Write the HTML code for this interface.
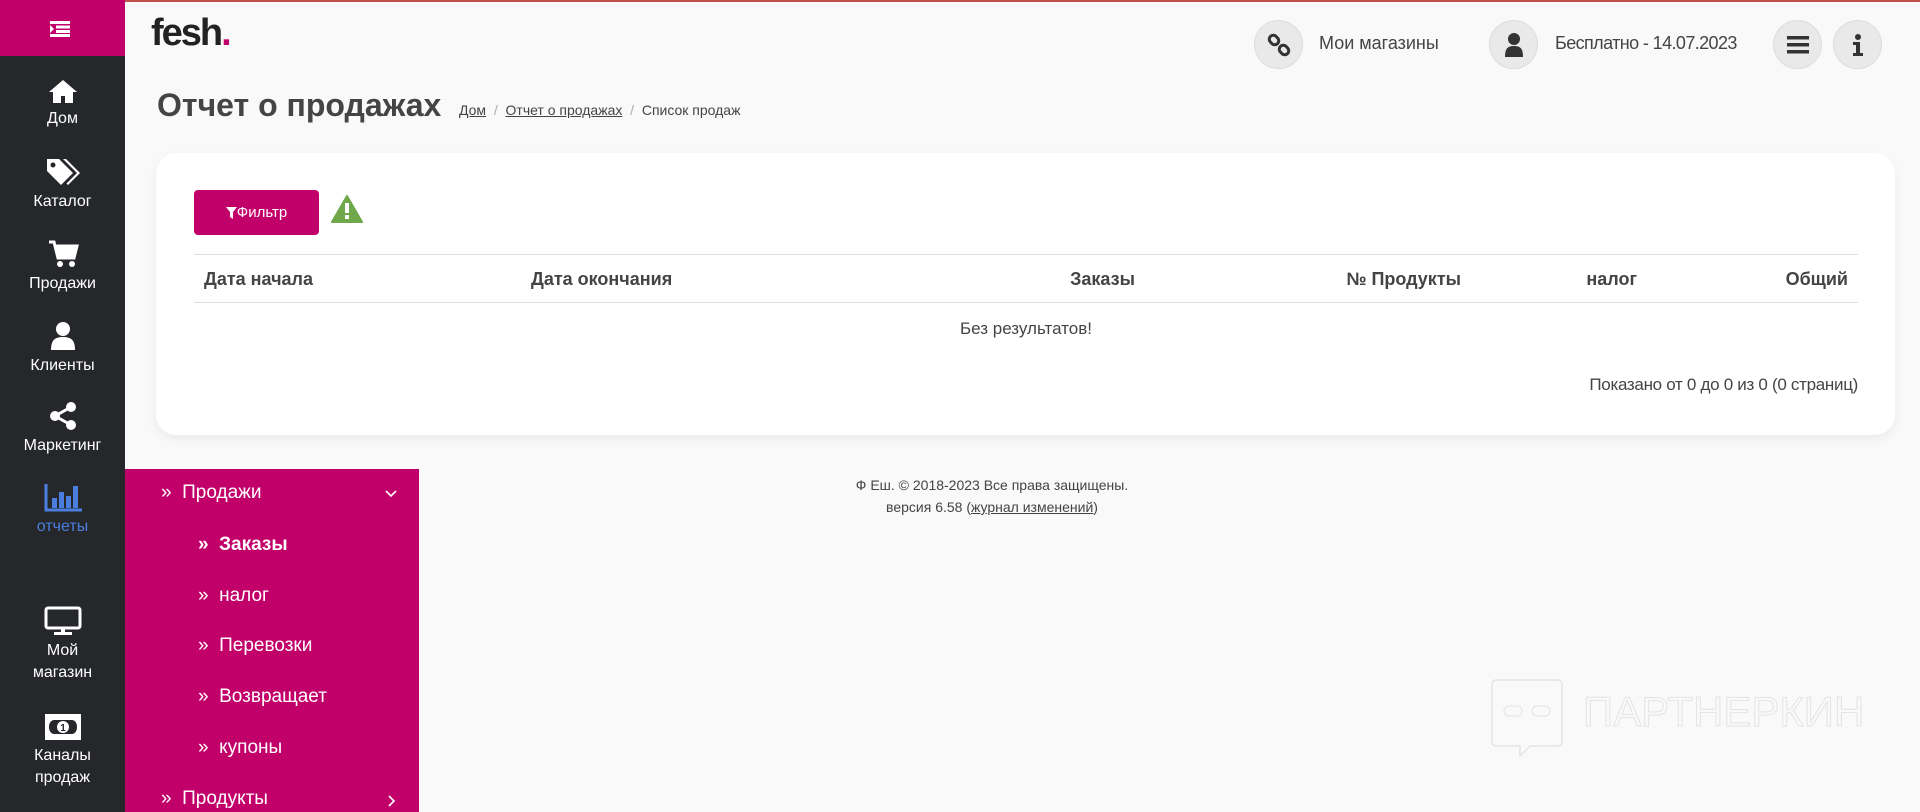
<!DOCTYPE html>
<html><head><meta charset="utf-8"><style>
*{margin:0;padding:0;box-sizing:border-box}
body{width:1920px;height:812px;overflow:hidden;background:#f9f9f9;font-family:"Liberation Sans",sans-serif;color:#333;position:relative}
.abs{position:absolute}
.topline{left:0;top:0;width:1920px;height:2px;background:#c0504d}
.side{left:0;top:0;width:125px;height:812px;background:#25272b}
.sidetop{left:0;top:0;width:125px;height:56px;background:#c2006a}
.si{position:absolute;left:0;width:125px;text-align:center;color:#fff;font-size:16px;line-height:22px}
.si svg{display:block;margin:0 auto 4px}
.sub{left:125px;top:469px;width:294px;height:343px;background:#c2006a;color:#fff}
.sub div{position:absolute;font-size:19px}
.circ{position:absolute;width:49px;height:49px;border-radius:50%;background:#e9e9e9;border:1px solid #ddd;display:flex;align-items:center;justify-content:center}
.card{left:156px;top:153px;width:1739px;height:282px;background:#fff;border-radius:20px;box-shadow:0 4px 10px rgba(0,0,0,.06)}
</style></head><body>
<div class="abs topline"></div>
<div class="abs side"></div>
<div class="abs sidetop"></div>
<svg class="abs" style="left:50px;top:21px" width="20" height="16" viewBox="0 0 20 16"><rect x="0" y="0" width="20" height="3" fill="#fff"/><rect x="6" y="4.5" width="14" height="3" fill="#fff"/><rect x="6" y="9" width="14" height="3" fill="#fff"/><rect x="0" y="13" width="20" height="3" fill="#fff"/><path d="M0 4l4 4-4 4z" fill="#fff"/></svg>

<div class="si" style="top:78px"><svg width="32" height="26" viewBox="0 0 32 26"><path d="M16 2L2 14h4v11h8v-7h4v7h8V14h4z" fill="#fff"/></svg>Дом</div>
<div class="si" style="top:157px"><svg width="36" height="30" viewBox="0 0 36 30"><path d="M2 2h12l14 14-12 12L2 14z" fill="#fff"/><circle cx="8" cy="8" r="2.5" fill="#25272b"/><path d="M18 2h3l14 14-12 12-1.5-1.5L32 16z" fill="#fff"/></svg>Каталог</div>
<div class="si" style="top:239px"><svg width="32" height="30" viewBox="0 0 32 30"><path d="M2 3h5l4 16h16l3-12H9" fill="none" stroke="#fff" stroke-width="3"/><path d="M9 7h21l-3 12H11z" fill="#fff"/><circle cx="13" cy="25" r="3" fill="#fff"/><circle cx="25" cy="25" r="3" fill="#fff"/></svg>Продажи</div>
<div class="si" style="top:321px"><svg width="28" height="30" viewBox="0 0 28 30"><circle cx="14" cy="8" r="7" fill="#fff"/><path d="M2 29c0-10 4-13 12-13s12 3 12 13z" fill="#fff"/></svg>Клиенты</div>
<div class="si" style="top:401px"><svg width="30" height="30" viewBox="0 0 30 30"><circle cx="23" cy="6" r="5" fill="#fff"/><circle cx="7" cy="15" r="5" fill="#fff"/><circle cx="23" cy="24" r="5" fill="#fff"/><path d="M23 6L7 15l16 9" stroke="#fff" stroke-width="3" fill="none"/></svg>Маркетинг</div>
<div class="si" style="top:482px;color:#4a7fdf"><svg width="38" height="30" viewBox="0 0 38 30"><path d="M2 2v26h36" stroke="#4a7fdf" stroke-width="3" fill="none"/><rect x="8" y="16" width="5" height="10" fill="#4a7fdf"/><rect x="15" y="10" width="5" height="16" fill="#4a7fdf"/><rect x="22" y="14" width="5" height="12" fill="#4a7fdf"/><rect x="29" y="4" width="5" height="22" fill="#4a7fdf"/></svg>отчеты</div>
<div class="si" style="top:606px"><svg width="38" height="30" viewBox="0 0 38 30"><rect x="2" y="2" width="34" height="20" rx="2" fill="none" stroke="#fff" stroke-width="3"/><rect x="17" y="22" width="4" height="5" fill="#fff"/><rect x="10" y="26" width="18" height="3" fill="#fff"/></svg>Мой<br>магазин</div>
<div class="si" style="top:713px"><svg width="38" height="28" viewBox="0 0 38 28"><rect x="1" y="1" width="36" height="26" fill="#fff"/><path d="M5 14c0-5 3-7 5-7h18c2 0 5 2 5 7s-3 7-5 7H10c-2 0-5-2-5-7z" fill="#25272b"/><circle cx="19" cy="14" r="6" fill="#fff"/><text x="19" y="18" font-size="10" font-weight="bold" text-anchor="middle" fill="#25272b" font-family="Liberation Sans">1</text></svg>Каналы<br>продаж</div>

<div class="abs sub">
<div style="left:36px;top:13px">»&nbsp; Продажи</div>
<svg class="abs" style="left:260px;top:21px" width="12" height="8" viewBox="0 0 12 8"><path d="M1 1l5 5 5-5" stroke="#fff" stroke-width="1.6" fill="none"/></svg>
<div style="left:73px;top:65px;font-weight:bold">»&nbsp; Заказы</div>
<div style="left:73px;top:116px">»&nbsp; налог</div>
<div style="left:73px;top:166px">»&nbsp; Перевозки</div>
<div style="left:73px;top:217px">»&nbsp; Возвращает</div>
<div style="left:73px;top:268px">»&nbsp; купоны</div>
<div style="left:36px;top:319px">»&nbsp; Продукты</div>
<svg class="abs" style="left:263px;top:326px" width="8" height="12" viewBox="0 0 8 12"><path d="M1 1l5 5-5 5" stroke="#fff" stroke-width="1.6" fill="none"/></svg>
</div>

<div class="abs" style="left:151px;top:12px;font-size:38px;font-weight:bold;color:#222;letter-spacing:-2px">fesh<span style="color:#c2006a">.</span></div>
<div class="abs" style="left:157px;top:87px;font-size:32px;font-weight:bold;color:#444">Отчет о продажах</div>
<div class="abs" style="left:459px;top:102px;font-size:14px;color:#444"><u>Дом</u> <span style="color:#aaa">&nbsp;/&nbsp;</span> <u>Отчет о продажах</u> <span style="color:#aaa">&nbsp;/&nbsp;</span> Список продаж</div>

<div class="circ" style="left:1254px;top:20px"><svg width="24" height="24" viewBox="0 0 24 24"><rect x="2" y="3" width="10" height="8" rx="4" transform="rotate(45 7 7)" fill="none" stroke="#333" stroke-width="3"/><rect x="12" y="13" width="10" height="8" rx="4" transform="rotate(45 17 17)" fill="none" stroke="#333" stroke-width="3"/></svg></div>
<div class="abs" style="left:1319px;top:33px;font-size:18px;color:#444">Мои магазины</div>
<div class="circ" style="left:1489px;top:20px"><svg width="20" height="26" viewBox="0 0 20 26"><circle cx="10" cy="7" r="6" fill="#333"/><path d="M1 25c0-9 3-11 9-11s9 2 9 11z" fill="#333"/></svg></div>
<div class="abs" style="left:1555px;top:33px;font-size:18px;color:#444;letter-spacing:-0.6px">Бесплатно - 14.07.2023</div>
<div class="circ" style="left:1773px;top:20px"><svg width="22" height="18" viewBox="0 0 22 18"><rect y="0" width="22" height="3.5" fill="#333"/><rect y="7" width="22" height="3.5" fill="#333"/><rect y="14" width="22" height="3.5" fill="#333"/></svg></div>
<div class="circ" style="left:1833px;top:20px"><svg width="12" height="22" viewBox="0 0 12 22"><circle cx="6" cy="3" r="3" fill="#333"/><path d="M1 8h7v11h3v3H1v-3h3v-8H1z" fill="#333"/></svg></div>

<div class="abs card">
<div class="abs" style="left:38px;top:37px;width:125px;height:45px;background:#c2006a;border-radius:4px;color:#fff;font-size:15px;display:flex;align-items:center;justify-content:center"><svg width="11" height="12" viewBox="0 0 11 12"><path d="M0 0h11L7 5v7L4 10V5z" fill="#fff"/></svg>Фильтр</div>
<svg class="abs" style="left:175px;top:42px" width="32" height="28" viewBox="0 0 32 28"><path d="M16 1L31 27H1z" fill="#6ea84b" stroke="#6ea84b" stroke-linejoin="round" stroke-width="2"/><rect x="14" y="8" width="4" height="10" fill="#fff"/><rect x="14" y="20" width="4" height="4" fill="#fff"/></svg>
<div class="abs" style="left:38px;top:101px;width:1664px;height:1px;background:#ddd"></div>
<div class="abs" style="left:48px;top:116px;font-size:18px;font-weight:bold;color:#444">Дата начала</div>
<div class="abs" style="left:375px;top:116px;font-size:18px;font-weight:bold;color:#444">Дата окончания</div>
<div class="abs" style="left:0;width:979px;text-align:right;top:116px;font-size:18px;font-weight:bold;color:#444">Заказы</div>
<div class="abs" style="left:0;width:1305px;text-align:right;top:116px;font-size:18px;font-weight:bold;color:#444">№ Продукты</div>
<div class="abs" style="left:0;width:1481px;text-align:right;top:116px;font-size:18px;font-weight:bold;color:#444">налог</div>
<div class="abs" style="left:0;width:1692px;text-align:right;top:116px;font-size:18px;font-weight:bold;color:#444">Общий</div>
<div class="abs" style="left:38px;top:149px;width:1664px;height:1px;background:#ddd"></div>
<div class="abs" style="left:38px;width:1664px;text-align:center;top:166px;font-size:17px;color:#444">Без результатов!</div>
<div class="abs" style="left:0;width:1702px;text-align:right;top:222px;font-size:17px;color:#444;letter-spacing:-0.3px">Показано от 0 до 0 из 0 (0 страниц)</div>
</div>

<div class="abs" style="left:600px;width:784px;text-align:center;top:474px;font-size:14px;line-height:22px;color:#444">Ф Еш. © 2018-2023 Все права защищены.<br>версия 6.58 (<u>журнал изменений</u>)</div>

<svg class="abs" style="left:1488px;top:676px" width="400" height="90" viewBox="0 0 400 90"><path d="M4 8a4 4 0 0 1 4-4h62a4 4 0 0 1 4 4v58a4 4 0 0 1-4 4H42L32 80V70H8a4 4 0 0 1-4-4z" fill="none" stroke="#e4e4e4" stroke-width="1.5"/><rect x="16" y="30" width="18" height="10" rx="5" fill="none" stroke="#e4e4e4"/><rect x="44" y="30" width="18" height="10" rx="5" fill="none" stroke="#e4e4e4"/><text x="95" y="50" font-size="42" font-family="Liberation Sans" fill="none" stroke="#e4e4e4" stroke-width="1">ПАРТНЕРКИН</text></svg>
</body></html>
